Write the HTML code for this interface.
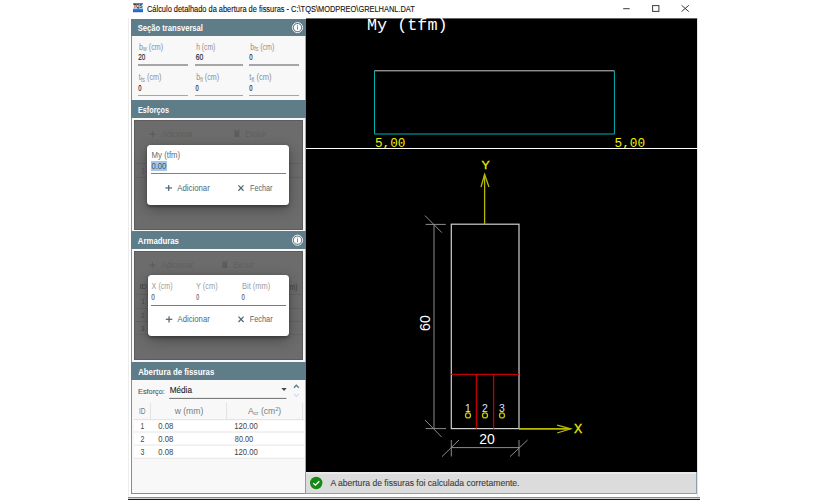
<!DOCTYPE html>
<html><head><meta charset="utf-8">
<style>
html,body{margin:0;padding:0;width:828px;height:500px;overflow:hidden;background:#fff;}
body{position:relative;font-family:"Liberation Sans",sans-serif;}
.a{position:absolute;}
.hdr{position:absolute;left:131px;width:175px;background:#5f7c89;}
.ul{position:absolute;height:1.4px;background:#a6a6a6;}
.gray{position:absolute;left:134px;width:168.6px;background:#6c6c6c;box-shadow:inset 0 0 0 1px #5c5c5c;}
.dlg{position:absolute;background:#fff;border-radius:3.5px;box-shadow:0 1.5px 3px rgba(0,0,0,0.30),0 4px 14px rgba(0,0,0,0.32);}
</style></head><body>

<!-- title bar -->
<svg class="a" style="left:133px;top:3px" width="10" height="10" viewBox="0 0 10 10">
 <defs><linearGradient id="ig" x1="0" y1="0" x2="0" y2="1"><stop offset="0" stop-color="#3e8fe8"/><stop offset="1" stop-color="#1858ad"/></linearGradient></defs>
 <rect x="0" y="0" width="10" height="1.6" fill="#3d8ae6"/>
 <rect x="0" y="1.6" width="10" height="4" fill="#f4f4f4"/>
 <text x="5" y="5.2" font-size="4.6" font-family="Liberation Sans" font-weight="bold" text-anchor="middle" fill="#1a1a1a" textLength="9.2" lengthAdjust="spacingAndGlyphs">TQS</text>
 <rect x="0" y="5.6" width="10" height="3.6" fill="url(#ig)"/>
</svg>
<svg class="a" style="left:615px;top:0" width="90" height="18">
 <line x1="8.2" y1="8.7" x2="14.7" y2="8.7" stroke="#3a3a3a" stroke-width="1"/>
 <rect x="37.6" y="5.6" width="6.3" height="5.8" fill="none" stroke="#3a3a3a" stroke-width="1"/>
 <line x1="66.6" y1="5.3" x2="73.8" y2="11.6" stroke="#3a3a3a" stroke-width="1"/>
 <line x1="73.8" y1="5.3" x2="66.6" y2="11.6" stroke="#3a3a3a" stroke-width="1"/>
</svg>

<!-- window borders -->
<div class="a" style="left:128px;top:18px;width:1px;height:479px;background:#ededed"></div>
<div class="a" style="left:697px;top:18px;width:1px;height:479px;background:#e4e4e4"></div>
<div class="a" style="left:128px;top:497px;width:572px;height:1px;background:#8a8a8a"></div>
<div class="a" style="left:128px;top:498px;width:572px;height:1px;background:#d0d0d0"></div>
<div class="a" style="left:128px;top:499px;width:572px;height:1px;background:#1a1a1a"></div>

<!-- left panel -->
<div class="a" style="left:131px;top:19px;width:175px;height:475px;background:#f8f8f8;"></div>
<div class="a" style="left:131px;top:19px;width:1px;height:475px;background:#7a919c"></div>
<div class="a" style="left:131px;top:493px;width:175px;height:1px;background:#7a919c"></div>

<div class="a" style="left:305px;top:19px;width:1px;height:475px;background:#9aabb4"></div>
<div class="hdr" style="top:19px;height:16.6px"></div>
<div class="hdr" style="top:100px;height:17.6px"></div>
<div class="hdr" style="top:231px;height:17.7px"></div>
<div class="hdr" style="top:362.3px;height:17.7px"></div>

<svg class="a" style="left:0;top:0" width="828" height="500">
 <g id="info">
  <circle cx="297.5" cy="27.6" r="5.1" fill="none" stroke="#f4f6f7" stroke-width="0.95"/>
  <circle cx="297.5" cy="27.6" r="3.6" fill="#fff"/>
  <rect x="297" y="24.9" width="1.0" height="0.9" fill="#7a919c"/>
  <rect x="297" y="26.3" width="1.0" height="3.4" fill="#7a919c"/>
 </g>
 <g transform="translate(0,212.6)">
  <circle cx="297.5" cy="27.6" r="5.1" fill="none" stroke="#f4f6f7" stroke-width="0.95"/>
  <circle cx="297.5" cy="27.6" r="3.6" fill="#fff"/>
  <rect x="297" y="24.9" width="1.0" height="0.9" fill="#7a919c"/>
  <rect x="297" y="26.3" width="1.0" height="3.4" fill="#7a919c"/>
 </g>
</svg>

<div class="ul" style="left:137.8px;top:64.2px;width:50.2px"></div>
<div class="ul" style="left:194.5px;top:64.2px;width:48px"></div>
<div class="ul" style="left:248.8px;top:64.2px;width:50.5px"></div>
<div class="ul" style="left:137.8px;top:94.6px;width:50.2px"></div>
<div class="ul" style="left:194.5px;top:94.6px;width:48px"></div>
<div class="ul" style="left:248.8px;top:94.6px;width:50.5px"></div>

<!-- overlay 1 -->
<div class="gray" style="top:120px;height:109.5px"></div>
<div class="a" style="left:135px;top:162.5px;width:167px;height:1px;background:#636363"></div>
<div class="a" style="left:135px;top:177px;width:167px;height:1px;background:#636363"></div>

<div class="dlg" style="left:147.2px;top:144.5px;width:142px;height:60.7px"></div>
<div class="a" style="left:150.8px;top:161.4px;width:16.3px;height:9.6px;background:#9fc7ee"></div>
<div class="a" style="left:150.8px;top:173.4px;width:134.8px;height:1.05px;background:#6a8795"></div>

<!-- overlay 2 -->
<div class="gray" style="top:250.8px;height:109.4px"></div>
<div class="a" style="left:135px;top:293.8px;width:167px;height:1px;background:#636363"></div>
<div class="a" style="left:135px;top:307.6px;width:167px;height:1px;background:#636363"></div>
<div class="a" style="left:135px;top:320.8px;width:167px;height:1px;background:#636363"></div>
<div class="a" style="left:135px;top:333.8px;width:167px;height:1px;background:#636363"></div>
<svg class="a" style="left:0;top:0" width="828" height="500">
 <g stroke="#5c5c5c" stroke-width="1.2" fill="none">
  <line x1="149.5" y1="134.3" x2="155.8" y2="134.3"/><line x1="152.65" y1="131.2" x2="152.65" y2="137.4"/>
  <line x1="149.4" y1="265" x2="155.4" y2="265"/><line x1="152.4" y1="262" x2="152.4" y2="268"/>
 </g>
 <g fill="#5c5c5c">
  <rect x="233.7" y="130.2" width="6.3" height="1.2"/><rect x="234.4" y="131.8" width="4.9" height="5.1"/>
  <rect x="221.9" y="261.4" width="5.9" height="1.2"/><rect x="222.6" y="263" width="4.5" height="5"/>
 </g>
</svg>
<div class="dlg" style="left:147.5px;top:275px;width:141.4px;height:60.5px"></div>
<div class="a" style="left:151px;top:304.8px;width:134.7px;height:1.2px;background:#7a7a7a"></div>

<svg class="a" style="left:0;top:0" width="828" height="500">
 <g stroke="#4f6877" stroke-width="1.25" fill="none">
  <line x1="165.4" y1="187.95" x2="172" y2="187.95"/><line x1="168.7" y1="184.9" x2="168.7" y2="191"/>
  <line x1="238.4" y1="185.4" x2="243.5" y2="190.8"/><line x1="243.5" y1="185.4" x2="238.4" y2="190.8"/>
  <line x1="165.8" y1="319.3" x2="172.3" y2="319.3"/><line x1="169.05" y1="316.2" x2="169.05" y2="322.4"/>
  <line x1="238.5" y1="316.6" x2="243.6" y2="322"/><line x1="243.6" y1="316.6" x2="238.5" y2="322"/>
 </g>
</svg>

<!-- abertura -->
<svg class="a" style="left:0;top:0" width="828" height="500">
 <path d="M281.4 388 L286.7 388 L284.05 391 Z" fill="#444"/>
 <rect x="169.1" y="397.9" width="117.3" height="1" fill="#6e6e6e"/>
 <path d="M293.9 387.8 L296.35 385.2 L298.8 387.8" fill="none" stroke="#5a7a8a" stroke-width="1.3"/>
 <path d="M293.9 393.8 L296.35 396.5 L298.8 393.8" fill="none" stroke="#cfdbe2" stroke-width="1.1"/>
 <rect x="134" y="420" width="170.5" height="38.5" fill="#fff"/>
 <rect x="150" y="402.4" width="0.9" height="16.6" fill="#e0e0e0"/>
 <rect x="226.2" y="402.4" width="0.9" height="16.6" fill="#e0e0e0"/>
 <rect x="302" y="402.4" width="0.9" height="16.6" fill="#e0e0e0"/>
 <rect x="134" y="419" width="170.5" height="1.2" fill="#e4e4e4"/>
 <rect x="134" y="431.5" width="170.5" height="1" fill="#e6e6e6"/>
 <rect x="134" y="444.6" width="170.5" height="1" fill="#e6e6e6"/>
 <rect x="134" y="457.7" width="170.5" height="1" fill="#e6e6e6"/>
</svg>

<!-- canvas -->
<svg class="a" style="left:0;top:0" width="828" height="500">
 <rect x="306" y="18.4" width="391" height="453.6" fill="#000"/>
 <text x="367" y="30.1" font-family="Liberation Mono" font-size="16" fill="#fff" textLength="80.5" lengthAdjust="spacingAndGlyphs">My (tfm)</text>
 <path d="M374.5 134 L374.5 70.8" stroke="#00b4b4" stroke-width="1" fill="none"/>
 <path d="M374.5 70.8 L614.4 70.8" stroke="#c8c8c8" stroke-width="1" fill="none"/>
 <path d="M614.4 70.8 L614.4 134 L374.5 134" stroke="#00b4b4" stroke-width="1" fill="none"/>
 <text x="375" y="147.2" font-family="Liberation Mono" font-size="13" fill="#f0f000" textLength="30.5" lengthAdjust="spacingAndGlyphs">5,00</text>
 <text x="614.6" y="147.2" font-family="Liberation Mono" font-size="13" fill="#f0f000" textLength="30.5" lengthAdjust="spacingAndGlyphs">5,00</text>
 <line x1="306" y1="148.5" x2="697" y2="148.5" stroke="#fff" stroke-width="1.2"/>

 <rect x="451.3" y="224.2" width="67.7" height="204.4" fill="none" stroke="#cfcfcf" stroke-width="1.2"/>
 <line x1="451.3" y1="374.4" x2="519" y2="374.4" stroke="#c00000" stroke-width="1.3"/>
 <line x1="476.4" y1="374.4" x2="476.4" y2="428.6" stroke="#c00000" stroke-width="1.3"/>
 <line x1="493.6" y1="374.4" x2="493.6" y2="428.6" stroke="#c00000" stroke-width="1.3"/>
 <g font-family="Liberation Sans" font-size="10.4" fill="#dde6ff" text-anchor="middle">
  <text x="468" y="411.5">1</text><text x="485" y="411.5">2</text><text x="502" y="411.5">3</text>
 </g>
 <g fill="none" stroke="#c4c400" stroke-width="1.3">
  <circle cx="468" cy="415.4" r="2.5"/><circle cx="485" cy="415.4" r="2.5"/><circle cx="502" cy="415.4" r="2.5"/>
 </g>
 <g stroke="#b8b800" stroke-width="1.3" fill="none">
  <line x1="484.6" y1="224" x2="484.6" y2="174.5"/>
  <path d="M481 187 L484.6 174.5 L489 187"/>
  <line x1="519" y1="428.8" x2="570.6" y2="428.8" stroke-width="1.8"/>
  <path d="M557.2 425.2 L570.6 428.8 L557.2 433"/>
 </g>
 <text x="481.6" y="168.9" font-family="Liberation Sans" font-size="11.5" fill="#f0f000" stroke="#e8e800" stroke-width="0.3" textLength="8.2" lengthAdjust="spacingAndGlyphs">Y</text>
 <text x="574" y="432.7" font-family="Liberation Sans" font-size="12.5" fill="#f0f000" stroke="#e8e800" stroke-width="0.3" textLength="8.2" lengthAdjust="spacingAndGlyphs">X</text>
 <g stroke="#8c8c8c" stroke-width="1" fill="none">
  <line x1="434" y1="224.4" x2="434" y2="428.6"/>
  <line x1="425.6" y1="224.4" x2="445.8" y2="224.4"/>
  <line x1="425.6" y1="428.6" x2="446" y2="428.6"/>
  <line x1="425" y1="215.6" x2="441.8" y2="232.6"/>
  <line x1="425" y1="420" x2="441.6" y2="437"/>
  <line x1="451.3" y1="447.6" x2="519" y2="447.6"/>
  <line x1="451.3" y1="440" x2="451.3" y2="456.5"/>
  <line x1="519" y1="440" x2="519" y2="456.5"/>
  <line x1="442" y1="456.6" x2="459" y2="440"/>
  <line x1="510" y1="456.6" x2="527.6" y2="440"/>
 </g>
 <text x="487" y="444.2" font-family="Liberation Sans" font-size="14" fill="#fff" text-anchor="middle">20</text>
 <text transform="translate(430.4,323.1) rotate(-90)" x="0" y="0" font-family="Liberation Sans" font-size="14" fill="#fff" text-anchor="middle">60</text>
</svg>

<!-- status bar -->
<div class="a" style="left:306px;top:472px;width:391px;height:21px;background:#dcdcdc"></div>
<div class="a" style="left:306px;top:472px;width:390px;height:1.6px;background:#e9e9e9"></div>
<div class="a" style="left:305px;top:472px;width:1px;height:22px;background:#8da0aa"></div>
<div class="a" style="left:306px;top:493px;width:391px;height:1px;background:#8da0aa"></div>
<div class="a" style="left:696px;top:472px;width:1px;height:22px;background:#8da0aa"></div>
<svg class="a" style="left:0;top:0" width="828" height="500">
 <circle cx="316.2" cy="483" r="6.2" fill="#138a13"/>
 <path d="M313.3 483.2 L315.4 485.2 L319.3 481.2" fill="none" stroke="#fff" stroke-width="1.3"/>
</svg>

<svg class="a" style="left:0;top:0" width="828" height="500">
<text x="147.00" y="11.60" font-family="Liberation Sans" font-size="8.9" font-weight="normal" fill="#111111" stroke="#111111" stroke-width="0.12" textLength="267.80" lengthAdjust="spacingAndGlyphs">Cálculo detalhado da abertura de fissuras - C:\TQS\MODPREO\GRELHANL.DAT</text>
<text x="137.80" y="30.80" font-family="Liberation Sans" font-size="8.6" font-weight="bold" fill="#ffffff" textLength="65.15" lengthAdjust="spacingAndGlyphs">Seção transversal</text>
<text x="138.00" y="113.00" font-family="Liberation Sans" font-size="8.6" font-weight="bold" fill="#ffffff" textLength="30.95" lengthAdjust="spacingAndGlyphs">Esforços</text>
<text x="137.80" y="243.90" font-family="Liberation Sans" font-size="8.6" font-weight="bold" fill="#ffffff" textLength="41.15" lengthAdjust="spacingAndGlyphs">Armaduras</text>
<text x="138.20" y="374.90" font-family="Liberation Sans" font-size="8.6" font-weight="bold" fill="#ffffff" textLength="76.05" lengthAdjust="spacingAndGlyphs">Abertura de fissuras</text>
<text x="139.05" y="49.80" font-family="Liberation Sans" font-size="8.6" font-weight="normal" fill="#8e8e8e" textLength="24.10" lengthAdjust="spacingAndGlyphs">b<tspan font-size="6.4" dy="1.1">w</tspan><tspan dy="-1.1"> (cm)</tspan></text>
<text x="196.25" y="49.80" font-family="Liberation Sans" font-size="8.6" font-weight="normal" fill="#8e8e8e" textLength="19.10" lengthAdjust="spacingAndGlyphs">h (cm)</text>
<text x="250.25" y="49.80" font-family="Liberation Sans" font-size="8.6" font-weight="normal" fill="#8e8e8e" textLength="24.10" lengthAdjust="spacingAndGlyphs">b<tspan font-size="6.4" dy="1.1">fs</tspan><tspan dy="-1.1"> (cm)</tspan></text>
<text x="138.85" y="80.40" font-family="Liberation Sans" font-size="8.6" font-weight="normal" fill="#8e8e8e" textLength="22.50" lengthAdjust="spacingAndGlyphs">t<tspan font-size="6.4" dy="1.1">fs</tspan><tspan dy="-1.1"> (cm)</tspan></text>
<text x="196.25" y="80.40" font-family="Liberation Sans" font-size="8.6" font-weight="normal" fill="#8e8e8e" textLength="22.90" lengthAdjust="spacingAndGlyphs">b<tspan font-size="6.4" dy="1.1">fi</tspan><tspan dy="-1.1"> (cm)</tspan></text>
<text x="249.35" y="80.40" font-family="Liberation Sans" font-size="8.6" font-weight="normal" fill="#8e8e8e" textLength="22.25" lengthAdjust="spacingAndGlyphs">t<tspan font-size="6.4" dy="1.1">fi</tspan><tspan dy="-1.1"> (cm)</tspan></text>
<text x="138.20" y="59.90" font-family="Liberation Sans" font-size="8.8" font-weight="normal" fill="#222222" stroke="#222222" stroke-width="0.15" textLength="7.00" lengthAdjust="spacingAndGlyphs">20</text>
<text x="195.65" y="59.90" font-family="Liberation Sans" font-size="8.8" font-weight="normal" fill="#222222" stroke="#222222" stroke-width="0.15" textLength="7.55" lengthAdjust="spacingAndGlyphs">60</text>
<text x="249.20" y="59.90" font-family="Liberation Sans" font-size="8.8" font-weight="normal" fill="#222222" stroke="#222222" stroke-width="0.15" textLength="3.35" lengthAdjust="spacingAndGlyphs">0</text>
<text x="138.20" y="90.50" font-family="Liberation Sans" font-size="8.8" font-weight="normal" fill="#222222" stroke="#222222" stroke-width="0.15" textLength="3.24" lengthAdjust="spacingAndGlyphs">0</text>
<text x="195.46" y="90.50" font-family="Liberation Sans" font-size="8.8" font-weight="normal" fill="#222222" stroke="#222222" stroke-width="0.15" textLength="3.24" lengthAdjust="spacingAndGlyphs">0</text>
<text x="249.20" y="90.50" font-family="Liberation Sans" font-size="8.8" font-weight="normal" fill="#222222" stroke="#222222" stroke-width="0.15" textLength="3.24" lengthAdjust="spacingAndGlyphs">0</text>
<text x="151.55" y="158.10" font-family="Liberation Sans" font-size="8.3" font-weight="normal" fill="#5a6d78" textLength="28.65" lengthAdjust="spacingAndGlyphs">My (tfm)</text>
<text x="151.40" y="169.20" font-family="Liberation Sans" font-size="8.5" font-weight="normal" fill="#3e5866" textLength="15.00" lengthAdjust="spacingAndGlyphs">0.00</text>
<text x="177.20" y="191.00" font-family="Liberation Sans" font-size="8.8" font-weight="normal" fill="#4f6877" textLength="32.60" lengthAdjust="spacingAndGlyphs">Adicionar</text>
<text x="250.00" y="191.00" font-family="Liberation Sans" font-size="8.8" font-weight="normal" fill="#4f6877" textLength="22.40" lengthAdjust="spacingAndGlyphs">Fechar</text>
<text x="151.60" y="289.20" font-family="Liberation Sans" font-size="8.3" font-weight="normal" fill="#9c9c9c" textLength="21.15" lengthAdjust="spacingAndGlyphs">X (cm)</text>
<text x="195.95" y="289.20" font-family="Liberation Sans" font-size="8.3" font-weight="normal" fill="#9c9c9c" textLength="21.85" lengthAdjust="spacingAndGlyphs">Y (cm)</text>
<text x="242.00" y="289.20" font-family="Liberation Sans" font-size="8.3" font-weight="normal" fill="#9c9c9c" textLength="28.35" lengthAdjust="spacingAndGlyphs">Bit (mm)</text>
<text x="151.20" y="299.90" font-family="Liberation Sans" font-size="8.4" font-weight="normal" fill="#606060" stroke="#606060" stroke-width="0.15" textLength="3.60" lengthAdjust="spacingAndGlyphs">0</text>
<text x="196.25" y="299.90" font-family="Liberation Sans" font-size="8.4" font-weight="normal" fill="#606060" stroke="#606060" stroke-width="0.15" textLength="2.90" lengthAdjust="spacingAndGlyphs">0</text>
<text x="241.45" y="299.90" font-family="Liberation Sans" font-size="8.4" font-weight="normal" fill="#606060" stroke="#606060" stroke-width="0.15" textLength="3.30" lengthAdjust="spacingAndGlyphs">0</text>
<text x="177.60" y="322.20" font-family="Liberation Sans" font-size="8.8" font-weight="normal" fill="#4f6877" textLength="32.20" lengthAdjust="spacingAndGlyphs">Adicionar</text>
<text x="249.75" y="322.20" font-family="Liberation Sans" font-size="8.8" font-weight="normal" fill="#4f6877" textLength="22.85" lengthAdjust="spacingAndGlyphs">Fechar</text>
<text x="161.85" y="137.00" font-family="Liberation Sans" font-size="8.4" font-weight="normal" fill="#5e5e5e" textLength="30.90" lengthAdjust="spacingAndGlyphs">Adicionar</text>
<text x="245.35" y="137.00" font-family="Liberation Sans" font-size="8.4" font-weight="normal" fill="#5e5e5e" textLength="21.00" lengthAdjust="spacingAndGlyphs">Excluir</text>
<text x="142.45" y="174.00" font-family="Liberation Sans" font-size="8.6" font-weight="normal" fill="#4a4a4a" stroke="#4a4a4a" stroke-width="0.2" textLength="1.45" lengthAdjust="spacingAndGlyphs">S</text>
<text x="161.40" y="268.00" font-family="Liberation Sans" font-size="8.4" font-weight="normal" fill="#5e5e5e" textLength="31.80" lengthAdjust="spacingAndGlyphs">Adicionar</text>
<text x="233.15" y="268.00" font-family="Liberation Sans" font-size="8.4" font-weight="normal" fill="#5e5e5e" textLength="20.80" lengthAdjust="spacingAndGlyphs">Excluir</text>
<text x="139.50" y="289.40" font-family="Liberation Sans" font-size="7.9" font-weight="normal" fill="#3c3c3c" textLength="7.20" lengthAdjust="spacingAndGlyphs">ID</text>
<text x="289.65" y="290.00" font-family="Liberation Sans" font-size="8.2" font-weight="normal" fill="#3a3a3a" textLength="7.75" lengthAdjust="spacingAndGlyphs">m)</text>
<text x="142.00" y="304.40" font-family="Liberation Sans" font-size="7.9" font-weight="normal" fill="#464646" stroke="#464646" stroke-width="0.15" textLength="2.40" lengthAdjust="spacingAndGlyphs">1</text>
<text x="141.14" y="318.20" font-family="Liberation Sans" font-size="7.9" font-weight="normal" fill="#464646" stroke="#464646" stroke-width="0.15" textLength="3.14" lengthAdjust="spacingAndGlyphs">2</text>
<text x="141.14" y="330.80" font-family="Liberation Sans" font-size="7.9" font-weight="normal" fill="#464646" stroke="#464646" stroke-width="0.15" textLength="3.14" lengthAdjust="spacingAndGlyphs">3</text>
<text x="138.00" y="393.50" font-family="Liberation Sans" font-size="8.0" font-weight="normal" fill="#4c555e" stroke="#4c555e" stroke-width="0.1" textLength="26.90" lengthAdjust="spacingAndGlyphs">Esforço:</text>
<text x="169.65" y="393.40" font-family="Liberation Sans" font-size="8.2" font-weight="normal" fill="#222222" stroke="#222222" stroke-width="0.1" textLength="22.35" lengthAdjust="spacingAndGlyphs">Média</text>
<text x="139.00" y="414.00" font-family="Liberation Sans" font-size="8.4" font-weight="normal" fill="#7a7a7a" textLength="6.55" lengthAdjust="spacingAndGlyphs">ID</text>
<text x="174.65" y="414.00" font-family="Liberation Sans" font-size="8.4" font-weight="normal" fill="#7a7a7a" textLength="28.60" lengthAdjust="spacingAndGlyphs">w (mm)</text>
<text x="248.00" y="413.80" font-family="Liberation Sans" font-size="8.4" font-weight="normal" fill="#7a7a7a" textLength="33.25" lengthAdjust="spacingAndGlyphs">A<tspan font-size="5.6" dy="1.2">cr</tspan><tspan dy="-1.2"> (cm</tspan><tspan font-size="5.6" dy="-3.2">2</tspan><tspan dy="3.2">)</tspan></text>
<text x="140.50" y="429.20" font-family="Liberation Sans" font-size="8.6" font-weight="normal" fill="#444444" textLength="3.76" lengthAdjust="spacingAndGlyphs">1</text>
<text x="158.25" y="429.20" font-family="Liberation Sans" font-size="8.6" font-weight="normal" fill="#444444" textLength="15.00" lengthAdjust="spacingAndGlyphs">0.08</text>
<text x="234.15" y="429.20" font-family="Liberation Sans" font-size="8.6" font-weight="normal" fill="#444444" textLength="23.65" lengthAdjust="spacingAndGlyphs">120.00</text>
<text x="140.38" y="442.20" font-family="Liberation Sans" font-size="8.6" font-weight="normal" fill="#444444" textLength="3.88" lengthAdjust="spacingAndGlyphs">2</text>
<text x="158.25" y="442.20" font-family="Liberation Sans" font-size="8.6" font-weight="normal" fill="#444444" textLength="15.00" lengthAdjust="spacingAndGlyphs">0.08</text>
<text x="234.85" y="442.20" font-family="Liberation Sans" font-size="8.6" font-weight="normal" fill="#444444" textLength="18.35" lengthAdjust="spacingAndGlyphs">80.00</text>
<text x="140.38" y="455.20" font-family="Liberation Sans" font-size="8.6" font-weight="normal" fill="#444444" textLength="3.88" lengthAdjust="spacingAndGlyphs">3</text>
<text x="158.25" y="455.20" font-family="Liberation Sans" font-size="8.6" font-weight="normal" fill="#444444" textLength="15.00" lengthAdjust="spacingAndGlyphs">0.08</text>
<text x="234.15" y="455.20" font-family="Liberation Sans" font-size="8.6" font-weight="normal" fill="#444444" textLength="23.65" lengthAdjust="spacingAndGlyphs">120.00</text>
<text x="330.40" y="486.00" font-family="Liberation Sans" font-size="9.2" font-weight="normal" fill="#3c3c3c" stroke="#3c3c3c" stroke-width="0.12" textLength="189.10" lengthAdjust="spacingAndGlyphs">A abertura de fissuras foi calculada corretamente.</text>
</svg>
</body></html>
